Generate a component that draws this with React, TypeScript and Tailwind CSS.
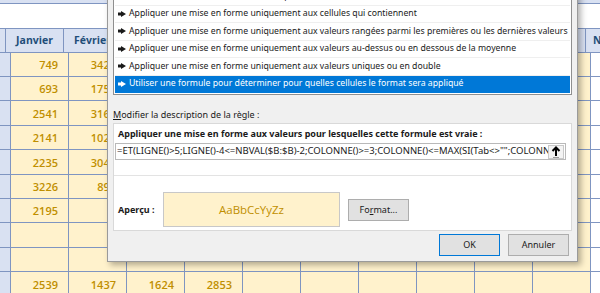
import React from 'react';

const GRID = 'border-[#7f95c1]';
const colWidths = [6, 58, 58, 58, 58, 58, 58, 58, 58, 58, 58, 70];
const headers = ['', 'Janvier', 'Février', '', '', '', '', '', '', '', '', 'Novembre'];
const rowHeights = [24, 24, 25, 24, 25, 24, 24, 25, 24, 25];
// only the cells that are not hidden under the dialog
const data: string[][] = [
  ['749', '3420'],
  ['693', '1755'],
  ['2541', '3163'],
  ['2141', '1029'],
  ['2235', '3045'],
  ['3226', '892'],
  ['2195', ''],
  ['', ''],
  ['', ''],
  ['2539', '1437', '1624', '2853'],
];

const items = [
  "Mettre en forme toutes les cellules d'après leur valeur",
  'Appliquer une mise en forme uniquement aux cellules qui contiennent',
  'Appliquer une mise en forme uniquement aux valeurs rangées parmi les premières ou les dernières valeurs',
  'Appliquer une mise en forme uniquement aux valeurs au-dessus ou en dessous de la moyenne',
  'Appliquer une mise en forme uniquement aux valeurs uniques ou en double',
  'Utiliser une formule pour déterminer pour quelles cellules le format sera appliqué',
];

function Bullet({ white }: { white?: boolean }) {
  return (
    <svg width="8" height="6" viewBox="0 0 8 6" className="shrink-0">
      <path d="M0 1.5 H3 V0 L8 3 L3 6 V4.5 H0 Z" fill={white ? '#ffffff' : '#1a1a1a'} />
    </svg>
  );
}

function Sheet() {
  return (
    <div className="font-['Open_Sans',sans-serif]">
      <div className={`h-[4px] bg-[#d9e1f2] border-b ${GRID}`} />
      <div className={`h-[25px] bg-white border-b ${GRID}`} />
      <div className="flex h-[24px]">
        {colWidths.map((w, i) => (
          <div
            key={i}
            style={{ width: w }}
            className={`shrink-0 border-r border-b ${GRID} bg-[#d9e1f2] flex items-center justify-center overflow-hidden whitespace-nowrap text-[10.5px] font-bold text-[#1f4e79]`}
          >
            {headers[i]}
          </div>
        ))}
      </div>
      {rowHeights.map((h, r) => (
        <div key={r} className="flex" style={{ height: h }}>
          {colWidths.map((w, i) => (
            <div
              key={i}
              style={{ width: w }}
              className={`shrink-0 border-r border-b ${GRID} flex items-center justify-end pr-[10px] pt-[2px] text-[11px] font-semibold text-[#bf8f00] ${
                i === 0 ? 'bg-[#d9e1f2]' : i === 11 ? 'bg-white' : 'bg-[#fff2cc]'
              }`}
            >
              {i > 0 ? data[r][i - 1] ?? '' : ''}
            </div>
          ))}
        </div>
      ))}
    </div>
  );
}

function Dialog() {
  return (
    <div className="absolute left-[107px] top-[-20px] w-[471px] bg-[#f0f0f0] border border-[#9a9a9a] shadow-[3px_3px_6px_rgba(0,0,0,0.3)] px-[5px] pt-[6px] pb-[5px] font-['Noto_Sans',sans-serif] text-[9px] text-[#1a1a1a]">
      <div className="bg-white border border-[#8f8f8f] pb-[1px] px-[1px]">
        {items.map((t, i) => {
          const sel = i === items.length - 1;
          return (
            <div
              key={i}
              className={`h-[17.5px] flex items-center gap-[3px] pl-[3px] whitespace-nowrap text-[8.7px] border-b ${
                sel ? 'bg-[#0078d7] text-white border-[#0078d7]' : 'border-[#efefef]'
              }`}
            >
              <Bullet white={sel} />
              <span>{t}</span>
            </div>
          );
        })}
      </div>
      <div className="mt-[13px] leading-[14px]">
        <span className="underline">M</span>odifier la description de la règle :
      </div>
      <div className="mt-[1px] bg-white border border-[#d9d9d9]">
        <div className="px-[1px] pt-[3px] pb-[15px] border-b border-[#e3e3e3]">
          <div className="pl-[3px] leading-[14px] font-bold">
            Appliquer une mise en forme aux valeurs pour lesquelles cette formule est vraie :
          </div>
          <div className="mt-[2px] mr-[4px] h-[17px] border border-[#b9b9b9] bg-white flex items-center">
            <div className="flex-1 overflow-hidden whitespace-nowrap pl-[1px] text-[9.5px]">
              =ET(LIGNE()&gt;5;LIGNE()-4&lt;=NBVAL($B:$B)-2;COLONNE()&gt;=3;COLONNE()&lt;=MAX(SI(Tab&lt;&gt;"";COLONNE(Tab))))
            </div>
            <div className="w-[16px] h-[14px] mr-[1px] bg-[#f3f3f3] border border-[#c9c9c9] flex items-center justify-center">
              <svg width="10" height="12" viewBox="0 0 10 12">
                <path d="M5 10 V1.5 M1.5 5 L5 1.5 L8.5 5" stroke="#000" strokeWidth="2" fill="none" />
                <path d="M2 11.5 H8" stroke="#9a9a9a" strokeWidth="1" />
              </svg>
            </div>
          </div>
        </div>
        <div className="flex items-center pl-[4px] pt-[16px] pb-[3px]">
          <div className="w-[45px] font-bold">Aperçu :</div>
          <div className="w-[177px] h-[35px] bg-[#fff2cc] border border-[#c8c8c8] flex items-center justify-center text-[11.5px] text-[#bf8f00] font-['Open_Sans',sans-serif]">
            AaBbCcYyZz
          </div>
          <button className="ml-[8px] w-[61px] h-[22px] bg-[#e1e1e1] border border-[#adadad] text-[9px]">
            Fo<span className="underline">r</span>mat...
          </button>
        </div>
      </div>
      <div className="mt-[3px] flex justify-end gap-[8px] pr-[3px]">
        <button className="w-[61px] h-[22px] bg-[#e1e1e1] border border-[#0078d7] text-[9px]">OK</button>
        <button className="w-[61px] h-[22px] bg-[#e1e1e1] border border-[#adadad] text-[9px]">Annuler</button>
      </div>
    </div>
  );
}

export default function App() {
  return (
    <div className="relative w-[600px] h-[293px] overflow-hidden bg-white">
      <Sheet />
      <Dialog />
    </div>
  );
}
